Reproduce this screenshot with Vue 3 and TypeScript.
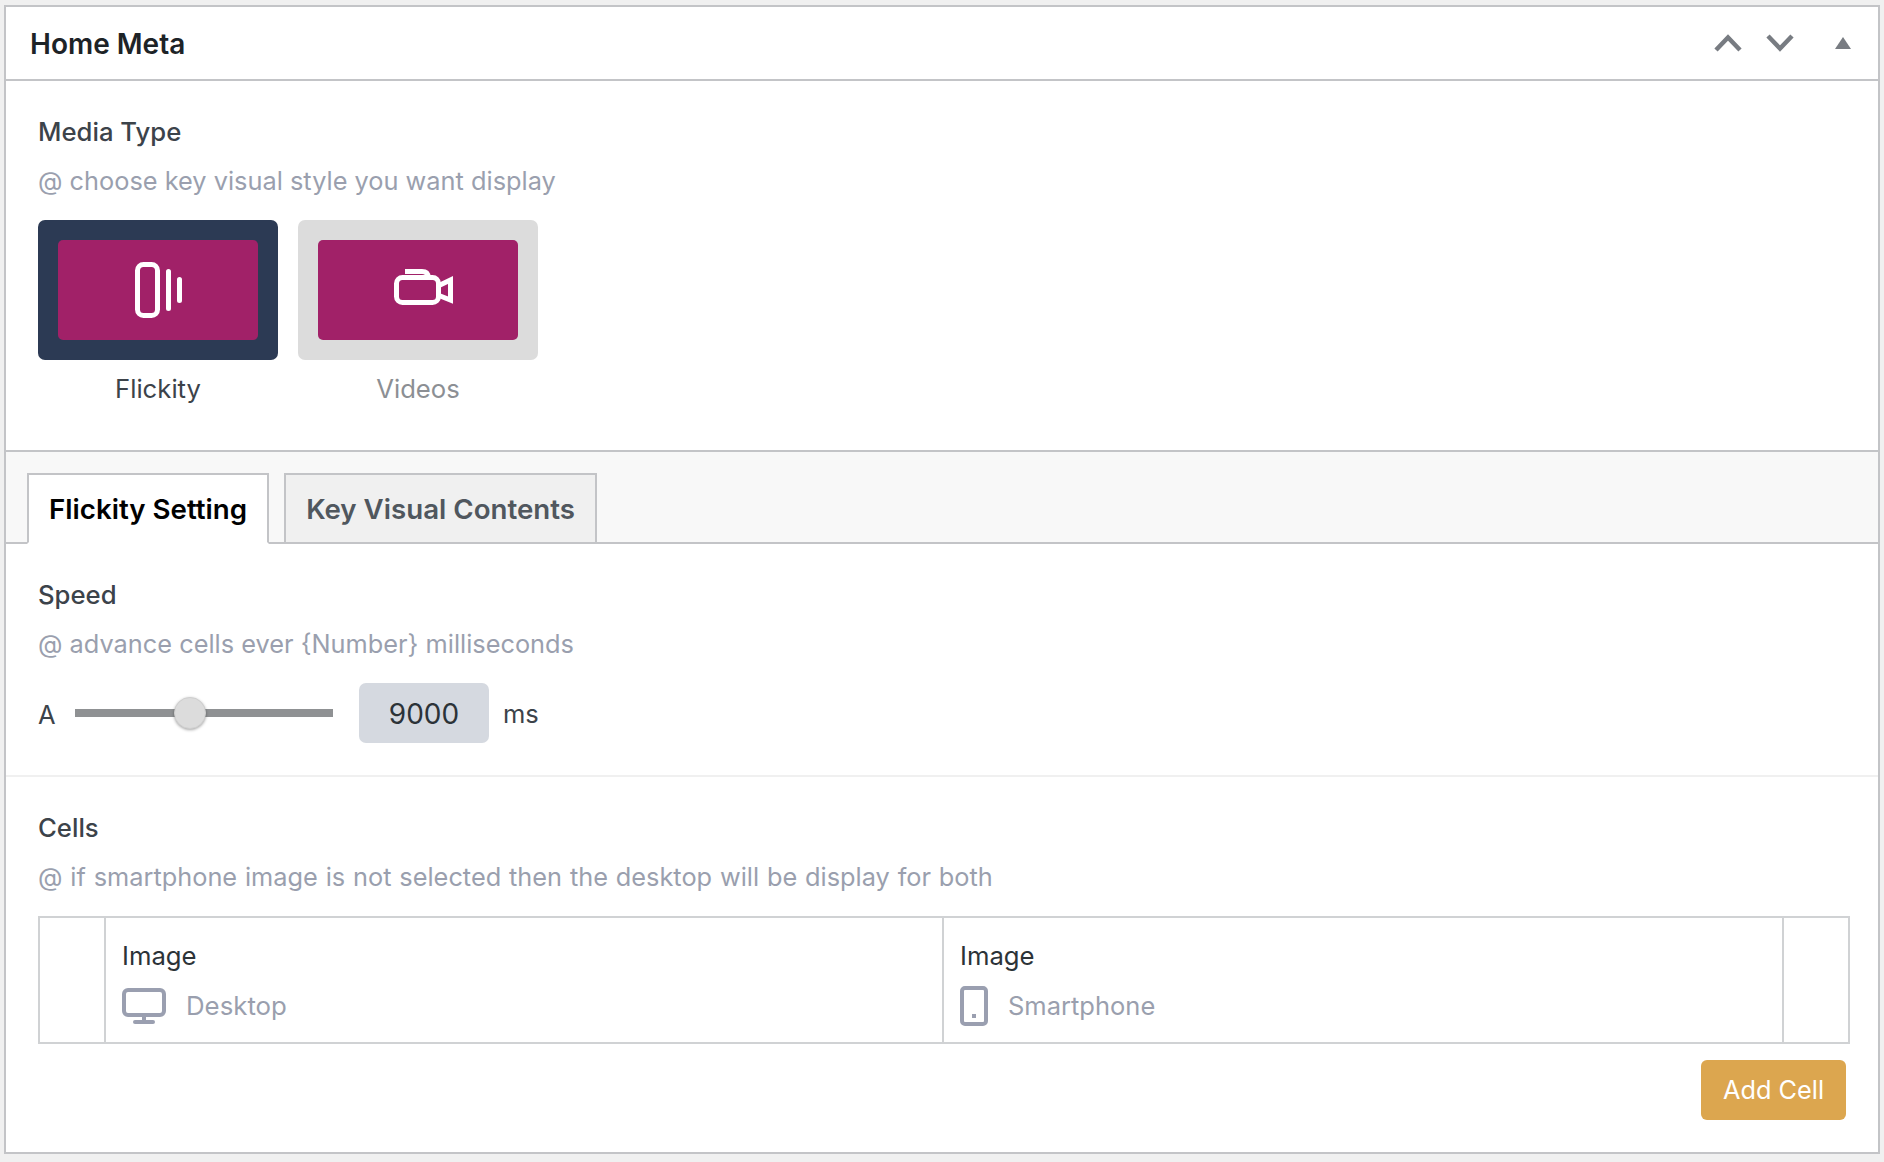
<script setup lang="ts">
import { ref } from 'vue'

const mediaTypes = ['Flickity', 'Videos']
const tabs = ['Flickity Setting', 'Key Visual Contents']
const activeMedia = ref('Flickity')
const activeTab = ref('Flickity Setting')
const speed = ref(44)
</script>

<template>
  <main class="page">
    <section class="panel">
      <header class="panel-head">
        <h2 class="panel-title">Home Meta</h2>
        <div class="head-actions">
          <svg class="chev" width="30" height="20" viewBox="0 0 30 20" aria-hidden="true"><path d="M3 17 L15 4.500 L27 17" /></svg>
          <svg class="chev" width="30" height="20" viewBox="0 0 30 20" aria-hidden="true"><path d="M3 3 L15 15.500 L27 3" /></svg>
          <svg class="tri" width="16" height="12" viewBox="0 0 16 12" aria-hidden="true"><path d="M8 0 L16 12 H0 Z" /></svg>
        </div>
      </header>

      <div class="media">
        <div class="label">Media Type</div>
        <div class="hint">@ choose key visual style you want display</div>
        <div class="cards">
          <div v-for="m in mediaTypes" :key="m" class="card-wrap" :class="{ on: activeMedia === m }" @click="activeMedia = m">
            <div class="card">
              <div class="card-inner">
                <svg v-if="m === 'Flickity'" width="80" height="80" viewBox="0 0 80 80" aria-hidden="true">
                  <rect x="19.500" y="14.500" width="20" height="51" rx="6" class="ic" />
                  <path d="M50.500 21.500 V58.500 M61.500 29.500 V50.500" class="ic bar" />
                </svg>
                <svg v-else class="cam" width="80" height="80" viewBox="0 0 80 80" aria-hidden="true">
                  <rect x="18.500" y="27.500" width="42" height="25" rx="6" class="ic" />
                  <path d="M27 21.500 H44 Q50 21.500 50 27" class="ic" />
                  <path d="M61 35.500 L72.500 30 V50 L61 45.500" class="ic" />
                </svg>
              </div>
            </div>
            <div class="card-label">{{ m }}</div>
          </div>
        </div>
      </div>

      <nav class="tabs">
        <button v-for="t in tabs" :key="t" class="tab" :class="{ active: activeTab === t }" @click="activeTab = t">{{ t }}</button>
      </nav>

      <div class="speed">
        <div class="label">Speed</div>
        <div class="hint">@ advance cells ever {Number} milliseconds</div>
        <div class="speed-row">
          <span class="speed-a">A</span>
          <input v-model="speed" class="range" type="range" min="0" max="100" />
          <input class="num" type="text" value="9000" />
          <span class="unit">ms</span>
        </div>
      </div>

      <div class="cells">
        <div class="label">Cells</div>
        <div class="hint wide">@ if smartphone image is not selected then the desktop will be display for both</div>
        <div class="table">
          <div class="col"></div>
          <div class="col pick">
            <div class="pick-title">Image</div>
            <div class="pick-row">
              <svg class="ico" width="44" height="36" viewBox="0 0 44 36" aria-hidden="true">
                <rect x="2" y="2" width="40" height="25" rx="4" class="ico-line" />
                <path d="M22 28 V33" class="ico-line" />
                <path d="M13 34 H31" class="ico-line round" />
              </svg>
              <span class="pick-text desk">Desktop</span>
            </div>
          </div>
          <div class="col pick">
            <div class="pick-title">Image</div>
            <div class="pick-row">
              <svg class="ico" width="28" height="40" viewBox="0 0 28 40" aria-hidden="true">
                <rect x="2" y="2" width="24" height="36" rx="3" class="ico-line" />
                <rect x="12" y="28" width="4" height="4" class="ico-dot" />
              </svg>
              <span class="pick-text phone">Smartphone</span>
            </div>
          </div>
          <div class="col last"></div>
        </div>
        <div class="actions">
          <button class="add">Add Cell</button>
        </div>
      </div>
    </section>
  </main>
</template>

<style>
html, body { margin: 0; background: #f0f0f0; }
</style>

<style scoped>
.page {
  padding: 5px 4px 8px;
  font-family: Inter, "Liberation Sans", sans-serif;
  color: #3c434a;
}
.panel {
  background: #fff;
  border: 2px solid #c3c4c7;
}
.panel-head {
  height: 72px;
  display: flex;
  align-items: center;
  justify-content: space-between;
  padding: 0 27px 0 24px;
  border-bottom: 2px solid #c3c4c7;
}
.panel-title {
  margin: 0;
  padding-top: 1px;
  font-size: 28px;
  font-weight: 600;
  color: #1d2327;
}
.head-actions { display: flex; align-items: center; }
.chev { margin-right: 22px; }
.chev path { fill: none; stroke: #787c82; stroke-width: 4.500; }
.chev + .tri { margin-left: 18px; }
.tri path { fill: #787c82; }

.label { font-size: 25.700px; line-height: 32px; font-weight: 500; color: #3c434a; }
.hint { margin-top: 17px; font-size: 25.350px; line-height: 32px; color: #9a9fae; }
.hint.wide { word-spacing: 0.700px; }

.media { padding: 35px 32px 45px; }
.cards { display: flex; gap: 20px; margin-top: 23px; }
.card-wrap { width: 240px; cursor: pointer; }
.card { height: 140px; padding: 20px; box-sizing: border-box; background: #dcdcdc; border-radius: 7px; }
.card-wrap.on .card { background: #2c3a54; }
.card-inner {
  height: 100%;
  background: #a12168;
  border-radius: 5px;
  display: flex;
  align-items: center;
  justify-content: center;
}
.ic { fill: none; stroke: #fff; stroke-width: 5; }
.bar { stroke-linecap: round; }
.card-label { margin-top: 13px; font-size: 25.700px; line-height: 32px; text-align: center; color: #8c8f94; }
.card-wrap.on .card-label { color: #3c434a; }

.tabs {
  display: flex;
  gap: 15px;
  align-items: flex-end;
  height: 90px;
  box-sizing: content-box;
  padding-left: 21px;
  background: #f8f8f8;
  border-top: 2px solid #c3c4c7;
  border-bottom: 2px solid #c3c4c7;
}
.tab {
  height: 71px;
  margin-bottom: -2px;
  padding: 0 20px;
  border: 2px solid #c3c4c7;
  background: #f0f0f0;
  font-family: inherit;
  font-size: 27.700px;
  font-weight: 600;
  color: #50575e;
  box-sizing: border-box;
}
.tab.active { background: #fff; border-bottom-color: #fff; color: #000; }

.speed { padding: 35px 32px 32px; border-bottom: 2px solid #f0f0f0; }
.speed-row { display: flex; align-items: center; height: 60px; margin-top: 23px; font-size: 25.500px; }
.speed-a { width: 37px; padding-top: 2px; }
.range {
  -webkit-appearance: none;
  appearance: none;
  width: 258px;
  height: 34px;
  margin: 0 26px 0 0;
  background: transparent;
}
.range::-webkit-slider-runnable-track { height: 8px; background: #8f9193; }
.range::-webkit-slider-thumb {
  -webkit-appearance: none;
  appearance: none;
  width: 32px;
  height: 32px;
  margin-top: -12px;
  border-radius: 50%;
  background: #dcdcdc;
  border: 1px solid #cfcfcf;
  box-shadow: 0 1px 3px rgba(0, 0, 0, .35);
}
.num {
  width: 130px;
  height: 60px;
  box-sizing: border-box;
  padding: 2px 0 0;
  border: 0;
  border-radius: 7px;
  background: #d5d9e0;
  font-family: inherit;
  font-size: 28px;
  color: #2c3338;
  text-align: center;
}
.unit { margin-left: 14px; padding-top: 0; }

.cells { padding: 35px 28px 32px 32px; }
.table {
  display: grid;
  grid-template-columns: 66px 838fr 840fr 64px;
  height: 128px;
  margin-top: 23px;
  box-sizing: border-box;
  border: 2px solid #d0d2d4;
}
.col { border-right: 2px solid #d0d2d4; }
.col.last { border-right: 0; }
.pick { padding: 22px 16px 0; }
.pick-title { font-size: 25.700px; line-height: 32px; color: #2c3338; }
.pick-row { display: flex; align-items: center; height: 40px; margin-top: 14px; }
.ico { display: block; }
.ico-line { fill: none; stroke: #9a9fb0; stroke-width: 4; }
.round { stroke-linecap: round; }
.ico-dot { fill: #9a9fb0; }
.pick-text { padding-bottom: 2px; font-size: 25.800px; color: #9a9fae; }
.desk { margin-left: 20px; }
.phone { margin-left: 20px; font-size: 25.500px; }
.actions { display: flex; justify-content: flex-end; margin-top: 16px; padding-right: 4px; }
.add {
  width: 145px;
  height: 60px;
  padding: 0 0 2px;
  border: 0;
  border-radius: 6px;
  background: #dca64f;
  color: #fff;
  font-family: inherit;
  font-size: 25.300px;
}
</style>
